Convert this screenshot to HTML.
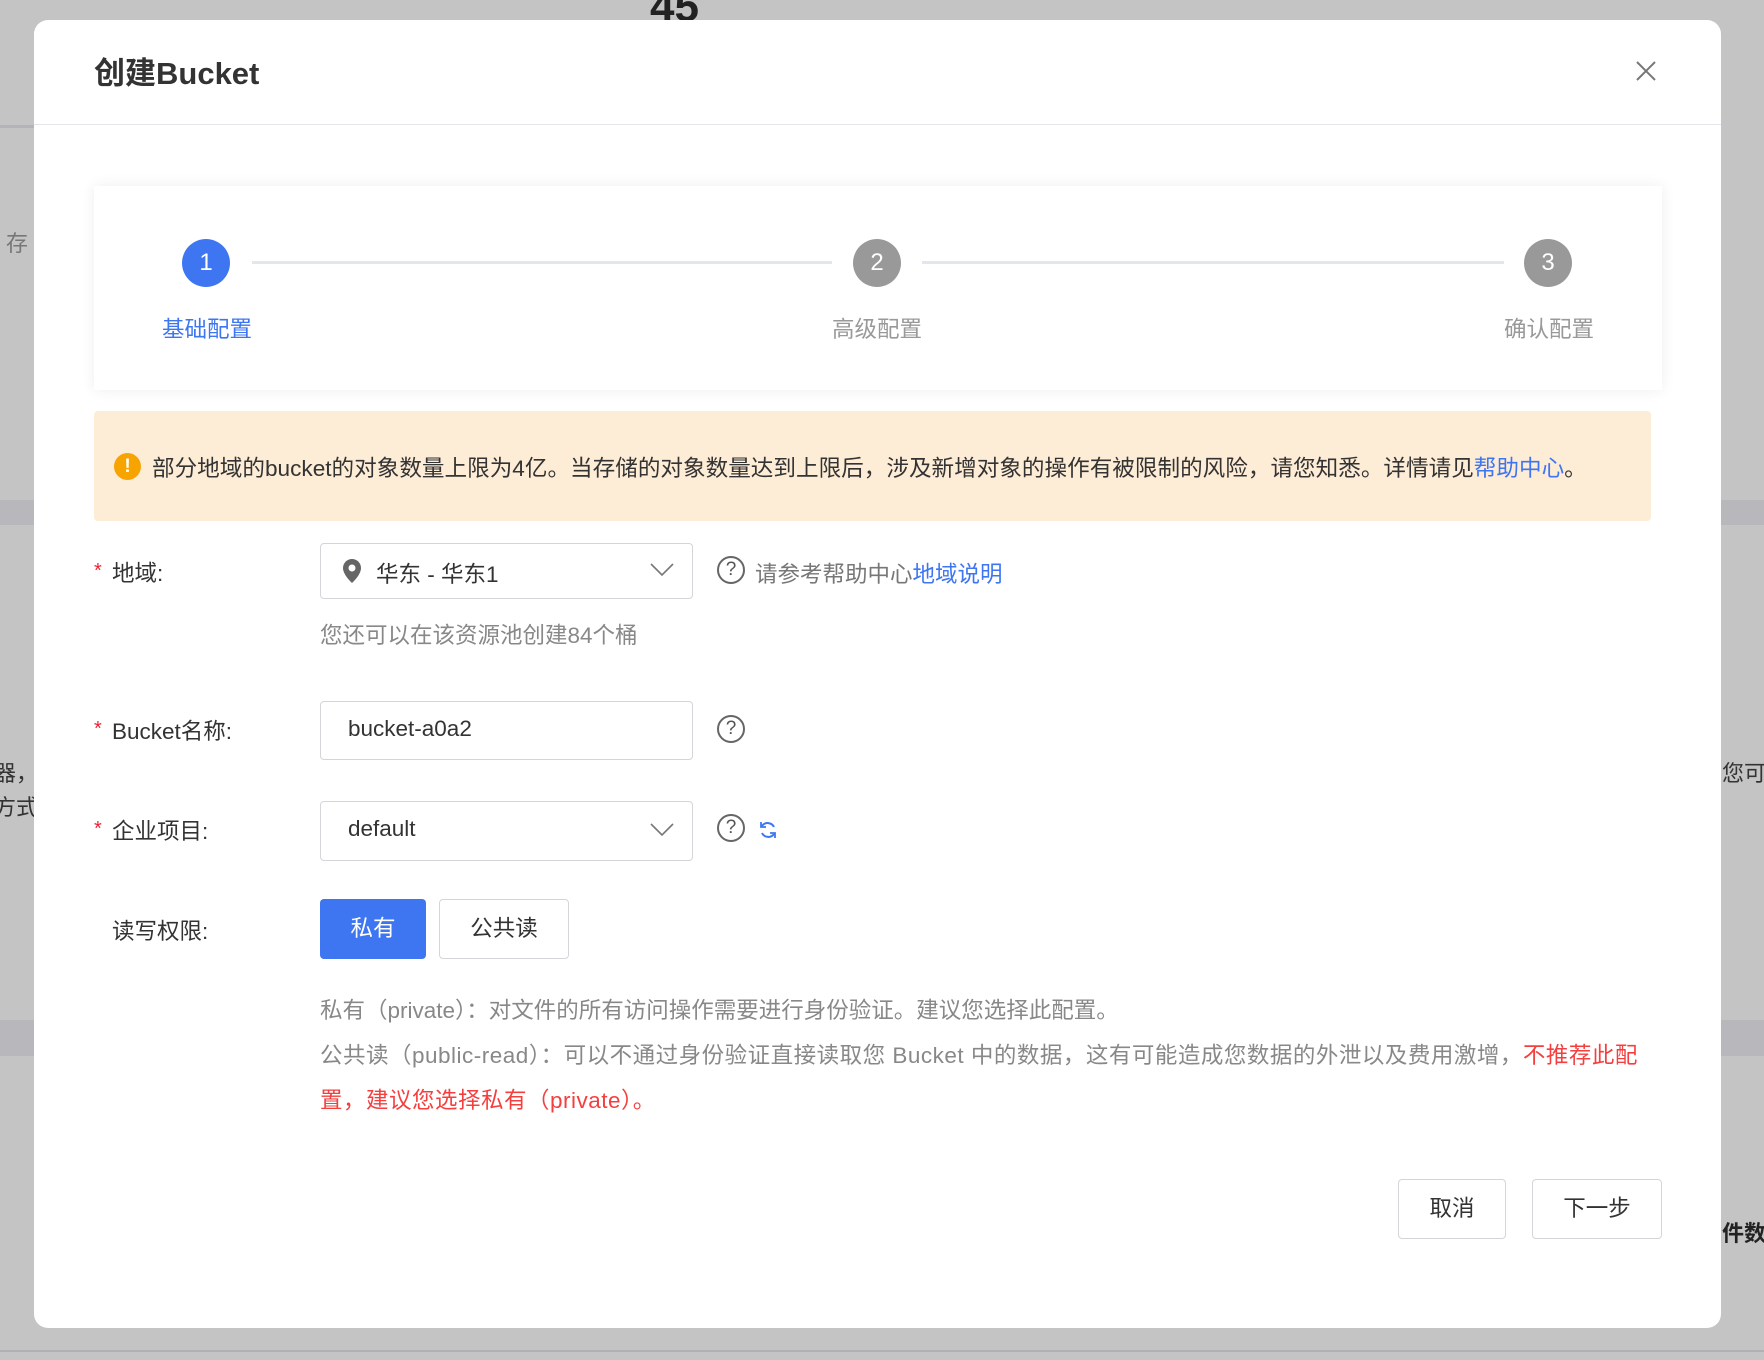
<!DOCTYPE html>
<html><head><meta charset="utf-8"><style>
*{margin:0;padding:0;box-sizing:border-box}
body{width:1764px;height:1360px;background:#c4c4c4;position:relative;overflow:hidden;font-family:"Liberation Sans","Noto Sans CJK SC",sans-serif;color:#333}
.a{position:absolute}
.modal{left:34px;top:20px;width:1687px;height:1308px;background:#fff;border-radius:14px}
.t{white-space:nowrap}
.circle{width:48px;height:48px;border-radius:50%;color:#fff;font-size:24px;line-height:48px;text-align:center}
.line{height:3px;background:#e3e6ee;top:261px}
.box{border:1px solid #d5d5d9;border-radius:4px;background:#fff}
.lbl{font-size:22.5px;color:#333}
.star{color:#e23;font-size:20px}
.q{width:28px;height:28px;border:2px solid #666;border-radius:50%;font-size:19px;line-height:24px;text-align:center;color:#555}
.btn{border:1px solid #d5d5d9;border-radius:4px;background:#fff;font-size:22.5px;text-align:center;color:#333}
</style></head><body>
<div class="a" style="left:0;top:125px;width:34px;height:3px;background:#b4b4b8"></div>
<div class="a" style="left:0;top:500px;width:34px;height:25px;background:#b8b8bc"></div>
<div class="a" style="left:1721px;top:500px;width:43px;height:25px;background:#b8b8bc"></div>
<div class="a" style="left:1721px;top:1020px;width:43px;height:36px;background:#b8b8bc"></div>
<div class="a" style="left:0;top:1020px;width:34px;height:36px;background:#b8b8bc"></div>
<div class="a t" style="left:6px;top:226px;font-size:22px;color:#777">存</div>
<div class="a t" style="left:-6px;top:756px;font-size:22px;color:#333">器，</div>
<div class="a t" style="left:-6px;top:790px;font-size:22px;color:#333">方式</div>
<div class="a t" style="left:1722px;top:756px;font-size:22px;color:#333">您可</div>
<div class="a t" style="left:1722px;top:1216px;font-size:22px;font-weight:bold;color:#222">件数</div>
<div class="a t" style="left:650px;top:-18px;font-size:44px;font-weight:bold;color:#222">45</div>
<div class="a" style="left:0;top:1350px;width:1764px;height:2px;background:#b0b0b4"></div>

<div class="a modal"></div>
<div class="a t" style="left:94px;top:48px;font-size:31px;font-weight:bold;color:#333">创建Bucket</div>
<svg class="a" style="left:1636px;top:61px" width="20" height="20"><path d="M1 1L19 19M19 1L1 19" stroke="#777" stroke-width="2"/></svg>
<div class="a" style="left:34px;top:124px;width:1687px;height:1px;background:#e4e5ea"></div>

<div class="a" style="left:94px;top:186px;width:1568px;height:204px;background:#fff;box-shadow:0 0 14px rgba(0,0,0,0.07)"></div>
<div class="a circle" style="left:182px;top:239px;background:#3e76f2">1</div>
<div class="a circle" style="left:853px;top:239px;background:#999">2</div>
<div class="a circle" style="left:1524px;top:239px;background:#999">3</div>
<div class="a line" style="left:252px;width:580px"></div>
<div class="a line" style="left:922px;width:582px"></div>
<div class="a t" style="left:162px;top:312px;font-size:22.5px;color:#3e76f2">基础配置</div>
<div class="a t" style="left:832px;top:312px;font-size:22.5px;color:#999">高级配置</div>
<div class="a t" style="left:1504px;top:312px;font-size:22.5px;color:#999">确认配置</div>

<div class="a" style="left:94px;top:411px;width:1557px;height:110px;background:#fdecd6;border-radius:4px"></div>
<div class="a" style="left:114px;top:453px;width:27px;height:27px;border-radius:50%;background:#f7a400;color:#fff;font-weight:bold;text-align:center;line-height:27px;font-size:19px">!</div>
<div class="a t" style="left:152px;top:450px;font-size:22.6px;color:#333">部分地域的bucket的对象数量上限为4亿。当存储的对象数量达到上限后，涉及新增对象的操作有被限制的风险，请您知悉。详情请见<span style="color:#3e76f2">帮助中心</span>。</div>

<div class="a star t" style="left:94px;top:560px">*</div>
<div class="a lbl t" style="left:112px;top:556px">地域:</div>
<div class="a box" style="left:320px;top:543px;width:373px;height:56px"></div>
<svg class="a" style="left:340px;top:557px" width="24" height="28"><path d="M12 2C7 2 3 6 3 11c0 7 9 15 9 15s9-8 9-15c0-5-4-9-9-9z" fill="#666"/><circle cx="12" cy="11" r="3.5" fill="#fff"/></svg>
<div class="a t" style="left:376px;top:557px;font-size:22.5px;color:#333">华东 - 华东1</div>
<svg class="a" style="left:650px;top:562px" width="24" height="16"><path d="M1 2L12 13L23 2" fill="none" stroke="#777" stroke-width="1.6"/></svg>
<div class="a q" style="left:717px;top:556px">?</div>
<div class="a t" style="left:755px;top:557px;font-size:22.5px;color:#777">请参考帮助中心<span style="color:#3e76f2">地域说明</span></div>
<div class="a t" style="left:320px;top:618px;font-size:22.5px;color:#888">您还可以在该资源池创建84个桶</div>

<div class="a star t" style="left:94px;top:718px">*</div>
<div class="a lbl t" style="left:112px;top:714px">Bucket名称:</div>
<div class="a box" style="left:320px;top:701px;width:373px;height:59px"></div>
<div class="a t" style="left:348px;top:716px;font-size:22.5px;color:#333">bucket-a0a2</div>
<div class="a q" style="left:717px;top:715px">?</div>

<div class="a star t" style="left:94px;top:818px">*</div>
<div class="a lbl t" style="left:112px;top:814px">企业项目:</div>
<div class="a box" style="left:320px;top:801px;width:373px;height:60px"></div>
<div class="a t" style="left:348px;top:816px;font-size:22.5px;color:#333">default</div>
<svg class="a" style="left:650px;top:822px" width="24" height="16"><path d="M1 2L12 13L23 2" fill="none" stroke="#777" stroke-width="1.6"/></svg>
<div class="a q" style="left:717px;top:814px">?</div>
<svg class="a" style="left:758px;top:820px" width="20" height="20"><path d="M16 7A7 7 0 0 0 4 6M4 13A7 7 0 0 0 16 14" fill="none" stroke="#3e76f2" stroke-width="2"/><path d="M3 2v5h5M17 18v-5h-5" fill="none" stroke="#3e76f2" stroke-width="1.8"/></svg>

<div class="a lbl t" style="left:112px;top:914px">读写权限:</div>
<div class="a" style="left:320px;top:899px;width:106px;height:60px;background:#3e76f2;border-radius:4px;color:#fff;font-size:22.5px;text-align:center;line-height:60px">私有</div>
<div class="a btn" style="left:439px;top:899px;width:130px;height:60px;line-height:58px">公共读</div>

<div class="a t" style="left:320px;top:993px;font-size:22.5px;color:#888">私有（private）：对文件的所有访问操作需要进行身份验证。建议您选择此配置。</div>
<div class="a t" style="left:320px;top:1038px;font-size:22.5px;letter-spacing:0.5px;color:#888">公共读（public-read）：可以不通过身份验证直接读取您 Bucket 中的数据，这有可能造成您数据的外泄以及费用激增，<span style="color:#f53f3f">不推荐此配</span></div>
<div class="a t" style="left:320px;top:1083px;font-size:22.5px;letter-spacing:0.5px;color:#f53f3f">置，建议您选择私有（private）。</div>

<div class="a btn" style="left:1398px;top:1179px;width:108px;height:60px;line-height:58px">取消</div>
<div class="a btn" style="left:1532px;top:1179px;width:130px;height:60px;line-height:58px">下一步</div>
</body></html>
